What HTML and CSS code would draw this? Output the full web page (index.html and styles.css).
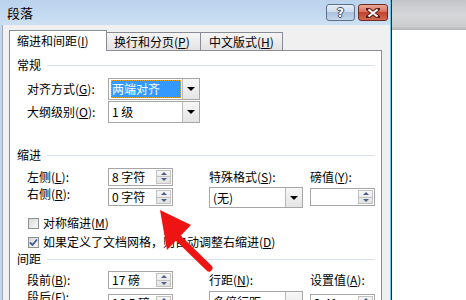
FILE: index.html
```html
<!DOCTYPE html>
<html lang="zh-CN">
<head>
<meta charset="utf-8">
<title>段落</title>
<link rel="stylesheet" href="styles.css">
</head>
<body>
<div class="screen">
  <div class="dialog">
    <div class="titlebar">
      <span class="title">段落</span>
      <div class="tbtns">
        <div class="tbtn help">?</div>
        <div class="tbtn close">
          <svg width="14" height="10" viewBox="0 0 14 10"><path d="M2 1 L12 9 M12 1 L2 9" stroke="#5a2018" stroke-width="4" stroke-linecap="square"/><path d="M2.5 1.5 L11.5 8.5 M11.5 1.5 L2.5 8.5" stroke="#fff" stroke-width="2"/></svg>
        </div>
      </div>
    </div>
    <div class="body">
      <div class="tabs">
        <div class="tab active t1">缩进和间距(<u>I</u>)</div>
        <div class="tab t2">换行和分页(<u>P</u>)</div>
        <div class="tab t3">中文版式(<u>H</u>)</div>
      </div>
      <div class="panel">
        <div class="sec first">常规</div>
        <div class="row r1">
          <span>对齐方式(<u>G</u>):</span>
          <div class="combo w92"><div class="val"><span class="hl">两端对齐</span></div><div class="dd"><i></i></div></div>
        </div>
        <div class="row r2">
          <span>大纲级别(<u>O</u>):</span>
          <div class="combo w92"><div class="val">1 级</div><div class="dd"><i></i></div></div>
        </div>

        <div class="sec s2">缩进</div>
        <div class="row ra">
          <span>左侧(<u>L</u>):</span>
          <div class="spin"><div class="val">8 字符</div><div class="sb"><b class="up"></b><b class="dn"></b></div></div>
          <span>特殊格式(<u>S</u>):</span>
          <span>磅值(<u>Y</u>):</span>
        </div>
        <div class="row rb">
          <span>右侧(<u>R</u>):</span>
          <div class="spin"><div class="val">0 字符</div><div class="sb"><b class="up"></b><b class="dn"></b></div></div>
          <div class="combo w94"><div class="val">(无)</div><div class="dd"><i></i></div></div>
          <div class="spin"><div class="val"></div><div class="sb"><b class="up"></b><b class="dn"></b></div></div>
        </div>
        <div class="check c1"><span class="cb"></span>对称缩进(<u>M</u>)</div>
        <div class="check c2"><span class="cb"><svg width="9" height="9" viewBox="0 0 9 9"><path d="M1 4.5 L3.5 7 L8 1.5" fill="none" stroke="#3d5a98" stroke-width="1.8"/></svg></span>如果定义了文档网格，则自动调整右缩进(<u>D</u>)</div>

        <div class="sec s3">间距</div>
        <div class="row rc">
          <span>段前(<u>B</u>):</span>
          <div class="spin"><div class="val">17 磅</div><div class="sb"><b class="up"></b><b class="dn"></b></div></div>
          <span>行距(<u>N</u>):</span>
          <span>设置值(<u>A</u>):</span>
        </div>
        <div class="row rd">
          <span>段后(<u>F</u>):</span>
          <div class="spin"><div class="val">16.5 磅</div><div class="sb"><b class="up"></b><b class="dn"></b></div></div>
          <div class="combo w94"><div class="val">多倍行距</div><div class="dd"><i></i></div></div>
          <div class="spin"><div class="val">2.41</div><div class="sb"><b class="up"></b><b class="dn"></b></div></div>
        </div>
      </div>
    </div>
  </div>
  <div class="outside"><div class="outside-top"></div></div>
</div>
<svg class="arrow" width="466" height="300" viewBox="0 0 466 300">
  <polygon points="160,210 191,225 167,250" fill="#ee1414"/>
  <line x1="176" y1="236" x2="209" y2="268" stroke="#ee1414" stroke-width="7" stroke-linecap="round"/>
</svg>
</body>
</html>
```
FILE: styles.css
```css
body {
  margin: 0;
  font-family: "Noto Sans CJK SC", "Noto Sans", sans-serif;
  font-size: 12px;
  color: #000;
  background: #fff;
  position: relative;
}
u { text-decoration: underline; }

.screen {
  display: flex;
  height: 300px;
  overflow: hidden;
}

.dialog {
  box-sizing: border-box;
  width: 392px;
  flex: none;
  padding: 0 1px 0 2px;
  border-right: 1px solid #1d2733;
  background: linear-gradient(to right, #c4d7ec 2px, #62c6ea 2px);
  display: flex;
  flex-direction: column;
}

.titlebar {
  height: 25px;
  flex: none;
  margin-left: -2px;
  padding: 0 2px 0 7px;
  display: flex;
  align-items: center;
  justify-content: space-between;
  background: linear-gradient(#bad2ec, #cde0f3);
}
.title {
  font-size: 13px;
  line-height: 16px;
}
.tbtns {
  display: flex;
  gap: 3px;
}
.tbtn {
  box-sizing: border-box;
  width: 29px;
  height: 17px;
  border: 1px solid #5f7189;
  border-radius: 3px;
  display: flex;
  align-items: center;
  justify-content: center;
}
.help {
  background: linear-gradient(#e6eef8, #cfdcee 45%, #adc2de 50%, #c4d6ec);
  color: #fff;
  font-family: "DejaVu Sans", sans-serif;
  font-weight: bold;
  font-size: 12px;
  line-height: 12px;
  text-shadow: 1px 0 #3c4a5e, -1px 0 #3c4a5e, 0 1px #3c4a5e, 0 -1px #3c4a5e;
}
.close {
  width: 30px;
  border-color: #6d2c22;
  background: linear-gradient(#eaa898, #d87360 45%, #c3432f 50%, #d36a52);
}

.body {
  flex: 1;
  background: #f0f0f0;
  border-left: 1px solid #9ba7b4;
  padding: 5px 8px 0 6px;
}

.tabs {
  display: flex;
  align-items: flex-end;
  height: 20px;
}
.tab {
  box-sizing: border-box;
  height: 18px;
  border: 1px solid #898c95;
  border-bottom: none;
  background: linear-gradient(#f5f5f5, #e3e3e3);
  display: flex;
  align-items: center;
  padding-left: 7px;
  line-height: 14px;
  margin-left: -1px;
  white-space: nowrap;
}
.tab.active {
  height: 21px;
  margin-bottom: -1px;
  margin-left: 0;
  background: #fff;
  position: relative;
  z-index: 1;
  padding-left: 7px;
  padding-top: 0;
}
.t1 { width: 98px; }
.t2 { width: 95px; }
.t3 { width: 83px; padding-left: 8px; }

.panel {
  background: #fff;
  border: 1px solid #898c95;
  padding: 0 6px 0 7px;
  height: 300px;
}

.sec {
  display: flex;
  align-items: center;
  height: 16px;
  line-height: 16px;
}
.sec::after {
  content: "";
  flex: 1;
  height: 1px;
  background: #d8e1e8;
  margin-left: 6px;
}
.sec.first { margin-top: 6px; }
.sec.s2 { margin-top: 24px; }

.row {
  display: grid;
  grid-template-columns: 81px 101px 101px 65px;
  align-items: center;
  padding-left: 10px;
  white-space: nowrap;
  line-height: 14px;
}
.r1 { height: 22px; margin-top: 5px; }
.r2 { height: 22px; margin-top: 1px; }
.ra { height: 21px; margin-top: 3px; }
.rb { height: 21px; align-items: start; }
.rb .spin { margin-top: 1px; }
.rc { height: 20px; margin-top: 3px; }
.rd { height: 22px; align-items: start; }
.rd .combo { margin-top: 1px; }
.rd .spin { margin-top: 4px; }

.combo {
  box-sizing: border-box;
  height: 22px;
  border: 1px solid #a6a6a6;
  background: #fff;
  display: flex;
}
.rb .combo, .rd .combo { height: 21px; }
.w92 { width: 92px; }
.w94 { width: 94px; }
.combo .val {
  flex: 1;
  display: flex;
  align-items: center;
  padding-left: 3px;
}
.combo .hl {
  flex: 1;
  align-self: stretch;
  margin: 1px 1px 1px -1px;
  background: #3399ff;
  color: #fff;
  display: flex;
  align-items: center;
  padding-left: 1px;
  outline: 1px dotted #e8a020;
  outline-offset: -1px;
}
.dd {
  box-sizing: border-box;
  width: 17px;
  margin: 0 0 0 0;
  border-left: 1px solid #b9b9b9;
  background: linear-gradient(#f7f7f7, #e4e4e4);
  display: flex;
  align-items: center;
  justify-content: center;
}
.dd i {
  width: 0;
  height: 0;
  border-left: 4px solid transparent;
  border-right: 4px solid transparent;
  border-top: 4px solid #000;
}

.spin {
  box-sizing: border-box;
  width: 65px;
  height: 18px;
  border: 1px solid #a6a6a6;
  background: #fff;
  display: flex;
}
.spin .val {
  flex: 1;
  display: flex;
  align-items: center;
  padding-left: 3px;
}
.sb {
  box-sizing: border-box;
  width: 15px;
  margin: 1px 1px 1px 0;
  border: 1px solid #c2c2c2;
  background: linear-gradient(#f6f6f6, #e2e2e2);
  display: flex;
  flex-direction: column;
}
.sb b {
  flex: 1;
  display: flex;
  align-items: center;
  justify-content: center;
}
.sb b.up { border-bottom: 1px solid #c2c2c2; }
.sb b.up::before {
  content: "";
  border-left: 3px solid transparent;
  border-right: 3px solid transparent;
  border-bottom: 3px solid #4a5f8c;
}
.sb b.dn::before {
  content: "";
  border-left: 3px solid transparent;
  border-right: 3px solid transparent;
  border-top: 3px solid #4a5f8c;
}

.check {
  display: flex;
  align-items: center;
  padding-left: 11px;
  white-space: nowrap;
  line-height: 14px;
}
.c1 { height: 20px; margin-top: 5px; }
.c2 { height: 18px; }
.cb {
  box-sizing: border-box;
  width: 11px;
  height: 11px;
  border: 1px solid #8e8f8f;
  background: linear-gradient(135deg, #d9d9d9, #fafafa);
  margin-right: 4px;
  display: flex;
  align-items: center;
  justify-content: center;
}

.outside {
  flex: 1;
  background: #fff;
}
.outside-top {
  height: 30px;
  background: linear-gradient(#c3c4c7, #d6d7d9 50%, #cbccce 88%, #b3b4b7);
}

.arrow {
  position: absolute;
  left: 0;
  top: 0;
  pointer-events: none;
}
```
